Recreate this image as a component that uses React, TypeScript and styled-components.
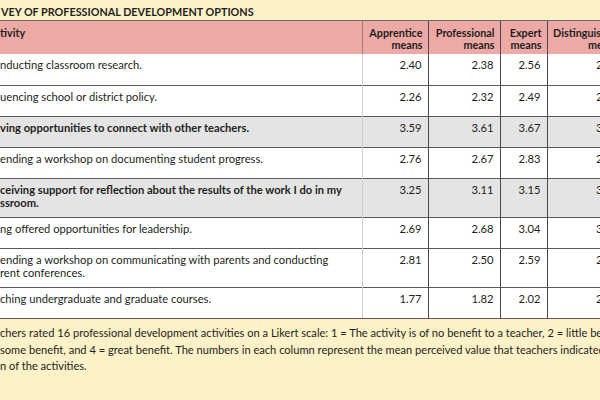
import React from "react";
import styled, { createGlobalStyle } from "styled-components";

const Global = createGlobalStyle`
  html, body { margin: 0; padding: 0; background: #fdf1c8; }
  body { font-family: Lato, "Liberation Sans", sans-serif; color: #231f20; }
`;

const Frame = styled.div`
  width: 600px;
  height: 400px;
  overflow: hidden;
  background: #fdf1c8;
  display: flex;
  flex-direction: column;
`;

const Title = styled.div`
  height: 21px;
  box-sizing: border-box;
  padding: 5px 0 0 1px;
  font-size: 10.8px;
  line-height: 14px;
  font-weight: 700;
  white-space: nowrap;
  border-bottom: 1px solid #6b6b6b;
`;

const Table = styled.table`
  width: 624px;
  table-layout: fixed;
  border-collapse: collapse;
  font-size: 11.2px;
  line-height: 13px;
  flex-shrink: 0;
`;

const HeadRow = styled.tr`
  background: #eda9a5;
  height: 33px;
`;

const Th = styled.th<{ $left?: boolean; $light?: boolean }>`
  padding: 6px 5px 0 ${(p) => (p.$left ? "0" : "5px")};
  vertical-align: top;
  text-align: ${(p) => (p.$left ? "left" : "right")};
  font-weight: 700;
  font-size: 10.8px;
  line-height: 12px;
  white-space: nowrap;
  overflow: hidden;
  border-left: 1px solid ${(p) => (p.$light ? "#9a8080" : "#4a4a4a")};
  &:first-child { border-left: none; }
`;

const Row = styled.tr<{ $shade?: boolean }>`
  background: ${(p) => (p.$shade ? "#e4e4e4" : "#ffffff")};
  height: 31px;
  border-top: 1px solid #5a5a5a;
  &:first-child { border-top: none; }
`;

const Td = styled.td<{ $bold?: boolean; $num?: boolean; $light?: boolean }>`
  padding: 4px ${(p) => (p.$num ? "6px" : "0")} 8px ${(p) => (p.$num ? "4px" : "0")};
  vertical-align: top;
  text-align: ${(p) => (p.$num ? "right" : "left")};
  font-weight: ${(p) => (p.$bold ? 700 : 400)};
  white-space: ${(p) => (p.$num ? "nowrap" : "normal")};
  overflow: hidden;
  border-left: 1px solid ${(p) => (p.$light ? "#cfcfcf" : "#4a4a4a")};
  &:first-child { border-left: none; }
`;

const Caption = styled.div`
  border-top: 1px solid #5a5a5a;
  padding: 6px 0 0 0;
  font-size: 11.1px;
  line-height: 16.5px;
  white-space: nowrap;
`;

const CaptionLine = styled.div``;

type Item = { text: string[]; bold?: boolean; v: string[] };

const rows: Item[] = [
  { text: ["nducting classroom research."], v: ["2.40", "2.38", "2.56", "2.51"] },
  { text: ["uencing school or district policy."], v: ["2.26", "2.32", "2.49", "2.43"] },
  { text: ["ving opportunities to connect with other teachers."], bold: true, v: ["3.59", "3.61", "3.67", "3.70"] },
  { text: ["ending a workshop on documenting student progress."], v: ["2.76", "2.67", "2.83", "2.80"] },
  {
    text: ["ceiving support for reflection about the results of the work I do in my", "ssroom."],
    bold: true,
    v: ["3.25", "3.11", "3.15", "3.30"],
  },
  { text: ["ng offered opportunities for leadership."], v: ["2.69", "2.68", "3.04", "3.12"] },
  {
    text: ["ending a workshop on communicating with parents and conducting", "rent conferences."],
    v: ["2.81", "2.50", "2.59", "2.64"],
  },
  { text: ["ching undergraduate and graduate courses."], v: ["1.77", "1.82", "2.02", "2.21"] },
];

export default function App() {
  return (
    <Frame>
      <Global />
      <Title>VEY OF PROFESSIONAL DEVELOPMENT OPTIONS</Title>
      <Table>
        <colgroup>
          <col style={{ width: 362 }} />
          <col style={{ width: 66 }} />
          <col style={{ width: 72 }} />
          <col style={{ width: 47 }} />
          <col style={{ width: 77 }} />
        </colgroup>
        <thead>
          <HeadRow>
            <Th $left>tivity</Th>
            <Th $light>
              Apprentice
              <br />
              means
            </Th>
            <Th>
              Professional
              <br />
              means
            </Th>
            <Th>
              Expert
              <br />
              means
            </Th>
            <Th>
              Distinguished
              <br />
              means
            </Th>
          </HeadRow>
        </thead>
        <tbody>
          {rows.map((r, i) => (
            <Row key={i} $shade={r.bold}>
              <Td $bold={r.bold}>
                {r.text.map((t, j) => (
                  <React.Fragment key={j}>
                    {j > 0 && <br />}
                    {t}
                  </React.Fragment>
                ))}
              </Td>
              {r.v.map((n, k) => (
                <Td key={k} $num $light={k === 0}>
                  {n}
                </Td>
              ))}
            </Row>
          ))}
        </tbody>
      </Table>
      <Caption>
        <CaptionLine>
          chers rated 16 professional development activities on a Likert scale: 1 = The activity is of no benefit to a teacher, 2 = little benefit, 3 =
        </CaptionLine>
        <CaptionLine>
          some benefit, and 4 = great benefit. The numbers in each column represent the mean perceived value that teachers indicated for
        </CaptionLine>
        <CaptionLine>n of the activities.</CaptionLine>
      </Caption>
    </Frame>
  );
}
